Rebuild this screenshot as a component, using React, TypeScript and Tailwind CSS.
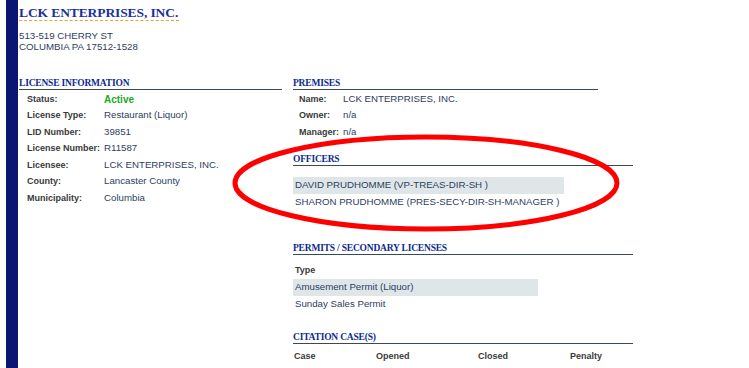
import React from 'react'

const serif = { fontFamily: '"Liberation Serif", "Times New Roman", serif' }
const sans = { fontFamily: '"Liberation Sans", Arial, sans-serif' }

function Heading({ children, className = '' }: { children: React.ReactNode; className?: string }) {
  return (
    <div
      style={serif}
      className={`border-b border-[#3a4a54] text-[9.5px] font-bold uppercase leading-[11px] tracking-[-0.2px] text-[#0c2a8e] ${className}`}
    >
      {children}
    </div>
  )
}

function Row({ label, value, labelW, valueClass = '' }: { label: string; value: string; labelW: string; valueClass?: string }) {
  return (
    <div className="flex h-[16.5px] items-center">
      <div className={`${labelW} shrink-0 text-[9px] font-bold text-[#3a3a3a]`}>{label}</div>
      <div className={`text-[9.7px] text-[#2e3d5e] ${valueClass}`}>{value}</div>
    </div>
  )
}

export default function App() {
  return (
    <div style={sans} className="relative flex min-h-[368px] overflow-hidden bg-white">
      <div className="ml-[6px] w-[12px] shrink-0 bg-[#0b1670]" />
      <div className="flex-1 pl-[1px]">
        <div
          style={serif}
          className="mt-[1px] inline-block border-b border-dashed border-[#f0a030] pr-[1px] text-[13.5px] font-bold leading-[14px] tracking-[-0.1px] text-[#1b2f9c]"
        >
          LCK ENTERPRISES, INC.
        </div>

        <div className="mt-[6px] text-[9.7px] leading-[11px] text-[#2e3d5e]">
          <div>513-519 CHERRY ST</div>
          <div>COLUMBIA PA 17512-1528</div>
        </div>

        <div className="mt-[26px] flex gap-[11px]">
          {/* left column */}
          <div className="w-[263px] shrink-0">
            <Heading>License Information</Heading>
            <div className="mt-[1px] pl-[8px]">
              <Row labelW="w-[77px]" label="Status:" value="Active" valueClass="font-bold !text-[#22a822] !text-[10px]" />
              <Row labelW="w-[77px]" label="License Type:" value="Restaurant (Liquor)" />
              <Row labelW="w-[77px]" label="LID Number:" value="39851" />
              <Row labelW="w-[77px]" label="License Number:" value="R11587" />
              <Row labelW="w-[77px]" label="Licensee:" value="LCK ENTERPRISES, INC." />
              <Row labelW="w-[77px]" label="County:" value="Lancaster County" />
              <Row labelW="w-[77px]" label="Municipality:" value="Columbia" />
            </div>
          </div>

          {/* right column */}
          <div className="w-[340px] shrink-0">
            <Heading className="w-[305px]">Premises</Heading>
            <div className="mt-[1px] pl-[6px]">
              <Row labelW="w-[44px]" label="Name:" value="LCK ENTERPRISES, INC." />
              <Row labelW="w-[44px]" label="Owner:" value="n/a" />
              <Row labelW="w-[44px]" label="Manager:" value="n/a" />
            </div>

            <Heading className="mt-[13px]">Officers</Heading>
            <div className="mt-[11px] text-[9.7px] text-[#2e3d5e]">
              <div className="flex h-[17px] w-[271px] items-center bg-[#dfe6e8] pl-[2px]">DAVID PRUDHOMME (VP-TREAS-DIR-SH )</div>
              <div className="flex h-[17px] items-center pl-[2px]">SHARON PRUDHOMME (PRES-SECY-DIR-SH-MANAGER )</div>
            </div>

            <Heading className="mt-[32px]">Permits / Secondary Licenses</Heading>
            <div className="mt-[8px] text-[9.7px] text-[#2e3d5e]">
              <div className="flex h-[16px] items-center pl-[2px] text-[9px] font-bold text-[#3a3a3a]">Type</div>
              <div className="flex h-[17px] w-[245px] items-center bg-[#dfe6e8] pl-[2px]">Amusement Permit (Liquor)</div>
              <div className="flex h-[17px] items-center pl-[2px]">Sunday Sales Permit</div>
            </div>

            <Heading className="mt-[19px]">Citation Case(s)</Heading>
            <div className="mt-[6px] flex text-[9px] font-bold text-[#3a3a3a]">
              <div className="w-[83px] pl-[1px]">Case</div>
              <div className="w-[102px]">Opened</div>
              <div className="w-[92px]">Closed</div>
              <div>Penalty</div>
            </div>
          </div>
        </div>
      </div>

      <svg className="pointer-events-none absolute left-0 top-0" width="749" height="368" viewBox="0 0 749 368">
        <ellipse cx="426" cy="183" rx="191" ry="46" fill="none" stroke="#ff0000" strokeWidth="5" />
      </svg>
    </div>
  )
}
